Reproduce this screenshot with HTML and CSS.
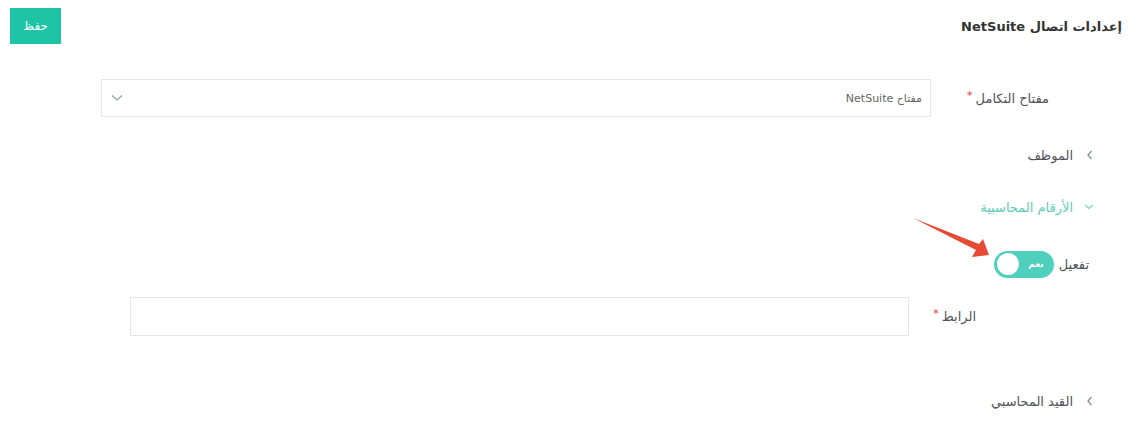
FILE: index.html
```html
<!DOCTYPE html>
<html lang="ar" dir="rtl">
<head>
<meta charset="utf-8">
<link rel="stylesheet" href="styles.css">
</head>
<body>
<div class="page">
  <header class="header">
    <h1 class="title">إعدادات اتصال NetSuite</h1>
    <button class="save">حفظ</button>
  </header>

  <div class="row row-key">
    <label class="label">مفتاح التكامل<span class="req">*</span></label>
    <div class="select">
      <span class="select-text">مفتاح NetSuite</span>
      <svg class="caret" width="12" height="8" viewBox="0 0 12 8"><path d="M1 1.5 L6 6 L11 1.5" fill="none" stroke="#9aa0a6" stroke-width="1.3"/></svg>
    </div>
  </div>

  <div class="collapse c-employee">
    <svg class="chev" width="8" height="10" viewBox="0 0 8 10"><path d="M5.5 1 L2 5 L5.5 9" fill="none" stroke="#8a8f96" stroke-width="1.3"/></svg>
    <span class="c-title">الموظف</span>
  </div>

  <div class="collapse c-accounts open">
    <svg class="chev" width="10" height="8" viewBox="0 0 10 8"><path d="M1 2 L5 5.5 L9 2" fill="none" stroke="#7fd6c8" stroke-width="1.3"/></svg>
    <span class="c-title">الأرقام المحاسبية</span>
  </div>

  <div class="row row-toggle">
    <span class="toggle-label">تفعيل</span>
    <div class="toggle">
      <span class="toggle-text">نعم</span>
      <span class="knob"></span>
    </div>
    <svg class="arrow" width="90" height="50" viewBox="905 212 90 50"><polygon points="913,219 979,245 983,240 989,256 972,258 976,251" fill="#e64a35"/></svg>
  </div>

  <div class="row row-url">
    <label class="label">الرابط<span class="req">*</span></label>
    <div class="input"></div>
  </div>

  <div class="collapse c-journal">
    <svg class="chev" width="8" height="10" viewBox="0 0 8 10"><path d="M5.5 1 L2 5 L5.5 9" fill="none" stroke="#8a8f96" stroke-width="1.3"/></svg>
    <span class="c-title">القيد المحاسبي</span>
  </div>
</div>
</body>
</html>
```

FILE: styles.css
```css
* { box-sizing: border-box; }
html, body { margin: 0; padding: 0; background: #fff; }
body {
  font-family: "DejaVu Sans", "Noto Sans", sans-serif;
  color: #4a4f55;
  width: 1146px;
  height: 422px;
  overflow: hidden;
}
.page { position: relative; }

.header {
  display: flex;
  justify-content: space-between;
  align-items: flex-start;
  padding: 8px 24px 0 10px;
  height: 79px;
}
.title {
  margin: 11px 0 0 0;
  font-size: 13px;
  font-weight: bold;
  color: #333;
}
.save {
  width: 51px;
  height: 36px;
  background: #1ec4a6;
  color: #fff;
  border: none;
  font-family: inherit;
  font-size: 12px;
  padding: 0;
}

.row { display: flex; align-items: center; }
.label {
  font-size: 13px;
  color: #4f545a;
  white-space: nowrap;
}
.req { color: #f0323c; font-size: 11px; position: relative; top: -4px; margin-right: 3px; }

.row-key { height: 38px; margin-right: 97px; margin-left: 101px; }
.row-key .label { width: 118px; }
.select {
  flex: 1;
  height: 38px;
  border: 1px solid #e6e6e6;
  display: flex;
  align-items: center;
  justify-content: space-between;
  padding: 0 8px 0 9px;
}
.select-text { font-size: 11px; color: #666; }
.caret { display: block; }

.collapse {
  display: flex;
  align-items: center;
  margin-right: 52px;
  height: 20px;
}
.collapse .chev { margin-left: 13px; display: block; }
.c-title { font-size: 13px; color: #4f545a; }
.c-employee { margin-top: 28px; }
.c-accounts { margin-top: 32px; }
.c-accounts .c-title { color: #5fcdb8; }
.c-accounts .chev { margin-left: 11px; }

.row-toggle { margin-top: 33px; margin-right: 57px; height: 28px; position: relative; }
.toggle-label { font-size: 13px; color: #4f545a; margin-left: 5px; }
.toggle {
  width: 60px;
  height: 27px;
  border-radius: 14px;
  background: #4fcfbd;
  display: flex;
  align-items: center;
  justify-content: space-between;
  padding: 0 10px 0 3px;
}
.toggle-text { color: #fff; font-size: 9px; font-weight: bold; }
.knob { width: 22px; height: 22px; border-radius: 50%; background: #fff; }
.arrow { position: absolute; left: 905px; top: -39px; }

.row-url { margin-top: 19px; margin-right: 170px; margin-left: 130px; height: 39px; }
.row-url .label { width: 67px; }
.input { flex: 1; height: 39px; border: 1px solid #e6e6e6; }

.c-journal { margin-top: 55px; }
```
